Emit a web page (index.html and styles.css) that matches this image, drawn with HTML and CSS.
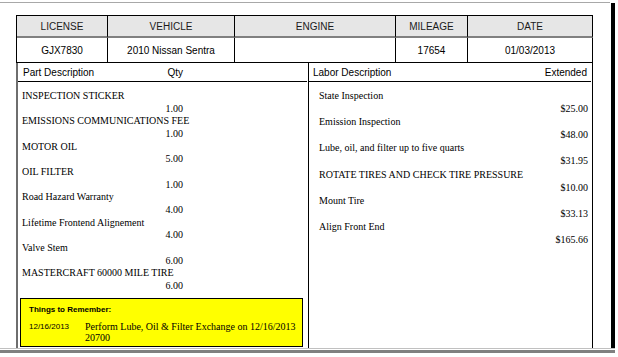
FILE: index.html
```html
<!DOCTYPE html>
<html>
<head>
<meta charset="utf-8">
<link rel="stylesheet" href="styles.css">
</head>
<body>
<div class="topline"></div>
<div class="frame">
  <div class="page">
    <div class="info">
      <div class="th">LICENSE</div>
      <div class="th">VEHICLE</div>
      <div class="th">ENGINE</div>
      <div class="th">MILEAGE</div>
      <div class="th">DATE</div>
      <div class="td">GJX7830</div>
      <div class="td">2010 Nissan Sentra</div>
      <div class="td"></div>
      <div class="td">17654</div>
      <div class="td">01/03/2013</div>
    </div>
    <div class="detail">
      <section class="parts">
        <div class="col-head"><div class="parts-head"><span>Part Description</span><span>Qty</span></div></div>
        <ul class="items">
          <li><div>INSPECTION STICKER</div><div class="qty">1.00</div></li>
          <li><div>EMISSIONS COMMUNICATIONS FEE</div><div class="qty">1.00</div></li>
          <li><div>MOTOR OIL</div><div class="qty">5.00</div></li>
          <li><div>OIL FILTER</div><div class="qty">1.00</div></li>
          <li><div>Road Hazard Warranty</div><div class="qty">4.00</div></li>
          <li><div>Lifetime Frontend Alignement</div><div class="qty">4.00</div></li>
          <li><div>Valve Stem</div><div class="qty">6.00</div></li>
          <li><div>MASTERCRAFT 60000 MILE TIRE</div><div class="qty">6.00</div></li>
        </ul>
        <div class="remember">
          <div class="rem-title">Things to Remember:</div>
          <div class="rem-row">
            <div class="rem-date">12/16/2013</div>
            <div class="rem-text">Perform Lube, Oil &amp; Filter Exchange on 12/16/2013<br>20700</div>
          </div>
        </div>
      </section>
      <section class="labor">
        <div class="col-head labor-head"><span>Labor Description</span><span>Extended</span></div>
        <ul class="items labor-items">
          <li><div>State Inspection</div><div class="amt">$25.00</div></li>
          <li><div>Emission Inspection</div><div class="amt">$48.00</div></li>
          <li><div>Lube, oil, and filter up to five quarts</div><div class="amt">$31.95</div></li>
          <li><div>ROTATE TIRES AND CHECK TIRE PRESSURE</div><div class="amt">$10.00</div></li>
          <li><div>Mount Tire</div><div class="amt">$33.13</div></li>
          <li><div>Align Front End</div><div class="amt">$165.66</div></li>
        </ul>
      </section>
    </div>
  </div>
  <div class="edge"></div>
</div>
<div class="bottomline"></div>
</body>
</html>
```
FILE: styles.css
```css
* { box-sizing: border-box; }
html, body { margin: 0; padding: 0; background: #fff; }
body { width: 618px; height: 357px; overflow: hidden; font-family: "Liberation Sans", Arial, sans-serif; color: #000; }

.topline { margin-top: 2px; height: 1px; width: 610px; background: #a8a8a8; }

.frame { display: flex; height: 345px; }
.page { width: 611px; padding: 12px 0 0 16px; }
.edge { width: 4px; background: #000; }

.info {
  display: grid;
  grid-template-columns: 91px 127px 161px 72px 125px;
  width: 577px;
  border-left: 1px solid #000;
  border-top: 1px solid #000;
  font-size: 10px;
}
.th, .td { border-right: 1px solid #000; text-align: center; }
.th {
  height: 22px;
  padding-top: 1px;
  line-height: 19px;
  background: #e6e6e6;
  border-bottom: 2px solid #808080;
  color: #1a1a1a;
}
.td {
  height: 25px;
  padding-top: 2px;
  line-height: 22px;
  border-bottom: 1px solid #000;
}

.detail {
  display: flex;
  width: 577px;
  height: 285px;
  border-left: 2px solid #6e6e6e;
  border-right: 1px solid #000;
}
.parts {
  width: 291px;
  border-right: 1px solid #000;
  display: flex;
  flex-direction: column;
}
.labor { width: 283px; }

.col-head {
  height: 19px;
  padding-top: 1px;
  line-height: 17px;
  font-size: 10px;
  border-bottom: 1px solid #000;
}
.parts .col-head { padding-left: 5px; margin-right: 1px; }
.parts-head { width: 160px; display: flex; justify-content: space-between; }
.labor-head {
  display: flex;
  justify-content: space-between;
  padding: 1px 4px 0 4px;
  margin-right: 1px;
}

.items {
  list-style: none;
  margin: 0;
  padding: 8px 0 0 4px;
  font-family: "Liberation Serif", "Times New Roman", serif;
  font-size: 10px;
  line-height: 12.67px;
}
.qty { width: 161px; text-align: right; }
.labor-items { padding: 7px 4px 0 10px; line-height: 13.1px; }
.amt { text-align: right; }

.remember {
  margin: auto 5px 1px 2px;
  height: 49px;
  background: #ffff00;
  border: 1px solid #000;
  padding: 6px 0 0 8px;
}
.rem-title { font-size: 8px; font-weight: bold; line-height: 10px; }
.rem-row { display: flex; margin-top: 6px; }
.rem-date { width: 56px; font-size: 8px; line-height: 11px; }
.rem-text { font-family: "Liberation Serif", "Times New Roman", serif; font-size: 10px; line-height: 11px; }

.bottomline {
  height: 5px;
  width: 615px;
  border-top: 1px solid #c0c0c0;
  border-bottom: 3px solid #808080;
}
```
